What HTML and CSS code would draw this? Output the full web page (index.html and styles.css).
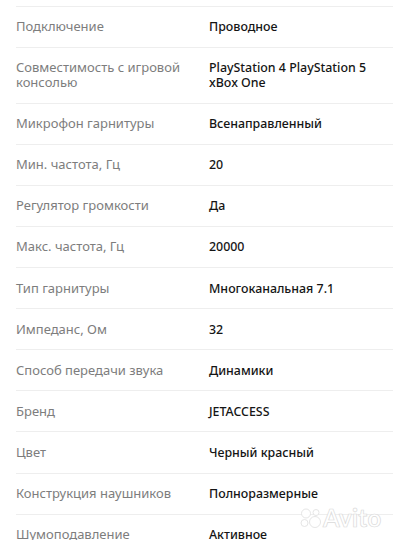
FILE: index.html
```html
<!DOCTYPE html>
<html lang="ru">
<head>
<meta charset="utf-8">
<link rel="stylesheet" href="styles.css">
</head>
<body>
<div class="specs">
  <div class="row"><div class="label">Подключение</div><div class="value">Проводное</div></div>
  <div class="row"><div class="label">Совместимость с игровой консолью</div><div class="value">PlayStation 4 PlayStation 5 xBox One</div></div>
  <div class="row"><div class="label">Микрофон гарнитуры</div><div class="value">Всенаправленный</div></div>
  <div class="row"><div class="label">Мин. частота, Гц</div><div class="value">20</div></div>
  <div class="row"><div class="label">Регулятор громкости</div><div class="value">Да</div></div>
  <div class="row"><div class="label">Макс. частота, Гц</div><div class="value">20000</div></div>
  <div class="row"><div class="label">Тип гарнитуры</div><div class="value">Многоканальная 7.1</div></div>
  <div class="row"><div class="label">Импеданс, Ом</div><div class="value">32</div></div>
  <div class="row"><div class="label">Способ передачи звука</div><div class="value">Динамики</div></div>
  <div class="row"><div class="label">Бренд</div><div class="value">JETACCESS</div></div>
  <div class="row"><div class="label">Цвет</div><div class="value">Черный красный</div></div>
  <div class="row"><div class="label">Конструкция наушников</div><div class="value">Полноразмерные</div></div>
  <div class="row"><div class="label">Шумоподавление</div><div class="value">Активное</div></div>
</div>
<div class="watermark">
  <svg class="wm-dots" width="23" height="20" viewBox="0 0 23 20">
    <circle cx="7" cy="5.5" r="4.5"/>
    <circle cx="17" cy="4.5" r="3"/>
    <circle cx="5.5" cy="15" r="3.5"/>
    <circle cx="16" cy="14" r="5.5"/>
  </svg>
  <span class="wm-text">Avito</span>
</div>
</body>
</html>
```
FILE: styles.css
```css
html, body {
  margin: 0;
  padding: 0;
  background: #ffffff;
  overflow: hidden;
}
body {
  width: 404px;
  height: 540px;
  position: relative;
  font-family: "Noto Sans", "Open Sans", sans-serif;
  font-size: 12px;
}
.specs {
  padding: 5.5px 11px 0 16px;
}
.row {
  display: grid;
  grid-template-columns: 193px 1fr;
  border-top: 1px solid #eeeeee;
  padding: 12.5px 0 12.6px;
  line-height: 15px;
}
.label {
  color: #7d7d7d;
  font-size: 13px;
  padding-right: 12px;
}
.value {
  color: #151515;
  font-size: 12.4px;
  font-weight: 500;
  padding-right: 10px;
}
.watermark {
  position: absolute;
  left: 299px;
  top: 503px;
  display: flex;
  align-items: center;
  gap: 1px;
}
.wm-dots circle {
  fill: #ffffff;
  stroke: #dedede;
  stroke-width: 0.8;
}
.wm-text {
  font-family: "Lato", "Noto Sans", sans-serif;
  font-size: 24px;
  font-weight: 700;
  color: #ffffff;
  -webkit-text-stroke: 0.7px #dadada;
  letter-spacing: 0.3px;
}
```
